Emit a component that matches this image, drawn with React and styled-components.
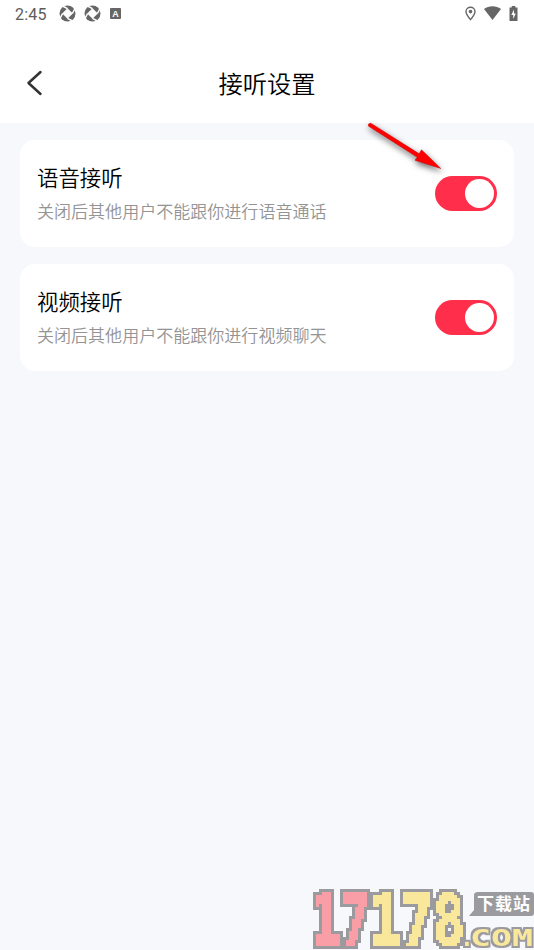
import React, { useState } from "react";
import styled, { createGlobalStyle } from "styled-components";

const GlobalStyle = createGlobalStyle`
  body {
    margin: 0;
    background: #f6f8fc;
    font-family: "Liberation Sans", "Noto Sans CJK SC", sans-serif;
  }
`;
const Page = styled.div`
  position: relative;
  width: 534px;
  height: 950px;
  overflow: hidden;
  background: #f6f8fc;
`;
const StatusBar = styled.div`
  display: flex;
  align-items: center;
  justify-content: space-between;
  height: 26px;
  padding: 0 16px 0 15px;
  background: #fff;
`;
const StatusGroup = styled.div`
  display: flex;
  align-items: center;
  gap: ${props => props.$gap}px;
`;
const Time = styled.span`
  width: 36px;
  margin-top: 3px;
  font-family: Roboto, sans-serif;
  font-size: 16px;
  font-weight: 400;
  line-height: 26px;
  letter-spacing: 0.2px;
  color: #5c5c5c;
`;
const StatusIcon = styled.svg`
  display: block;
  fill: #666;
`;
const NavBar = styled.div`
  display: grid;
  grid-template-columns: 60px 1fr 60px;
  align-items: center;
  height: 97px;
  background: #fff;
`;
const Back = styled.button`
  display: block;
  justify-self: start;
  padding: 0 0 0 26px;
  margin-top: 17px;
  border: 0;
  background: none;
  line-height: 0;
  cursor: pointer;
`;
const Title = styled.h1`
  margin: 20px 0 0;
  font-size: 24.3px;
  font-weight: 350;
  line-height: 36px;
  text-align: center;
  color: #000;
`;
const List = styled.div`
  display: flex;
  flex-direction: column;
  gap: 17px;
  padding: 17px 20px;
`;
const Card = styled.div`
  display: flex;
  align-items: center;
  justify-content: space-between;
  height: 107px;
  padding: 0 17px;
  box-sizing: border-box;
  border-radius: 15px;
  background: #fff;
`;
const Name = styled.div`
  margin-top: 1px;
  font-size: 21.4px;
  font-weight: 350;
  line-height: 32px;
  color: #000;
`;
const Desc = styled.div`
  margin-top: 5px;
  font-size: 17.05px;
  font-weight: 350;
  line-height: 26px;
  color: #949494;
`;
const Switch = styled.button`
  display: flex;
  align-items: center;
  justify-content: ${props => props.$on ? 'flex-end' : 'flex-start'};
  width: 62.5px;
  height: 34.6px;
  padding: 0 2.8px;
  border: 0;
  border-radius: 18px;
  background: ${props => props.$on ? '#ff2e4a' : '#ddd'};
  cursor: pointer;
`;
const Knob = styled.span`
  width: 28.8px;
  height: 28.8px;
  border-radius: 50%;
  background: #fff;
`;
const Arrow = styled.svg`
  position: absolute;
  left: 360px;
  top: 115px;
  overflow: visible;
  filter: drop-shadow(1px 3px 3px rgba(0, 0, 0, 0.6));
  pointer-events: none;
`;
const Watermark = styled.svg`
  position: absolute;
  right: 0;
  bottom: 0;
  overflow: visible;
`;
const Digits = styled.text`
  font-family: "DejaVu Sans Mono", monospace;
  font-weight: 700;
  font-size: 69px;
  fill: ${props => props.color};
  stroke: ${props => props.color};
  stroke-width: 2px;
`;
const Domain = styled.text`
  font-family: "DejaVu Sans Mono", monospace;
  font-weight: 700;
  font-size: 23px;
  fill: #f9e79b;
`;
const BadgeText = styled.text`
  font-family: "Noto Sans CJK SC", sans-serif;
  font-weight: 700;
  font-size: 17px;
  fill: #fff;
`;

const Aperture = () => (
  <StatusIcon width="17" height="17" viewBox="0 0 17 17">
    <circle cx="8.5" cy="8.5" r="8" />
    <path d="M8.5 3.2 13.800 8.500 8.500 13.800 3.200 8.500z" fill="#fff" />
    <path d="M8.500 3.600 3.500 1M13.400 8.500 16 3.500M8.500 13.400 13.500 16M3.600 8.500 1 13.500" stroke="#fff" strokeWidth="1.5" />
  </StatusIcon>
);

const rows = [
  { name: '语音接听', desc: '关闭后其他用户不能跟你进行语音通话' },
  { name: '视频接听', desc: '关闭后其他用户不能跟你进行视频聊天' }
];

const Row = ({ name, desc }) => {
  const [on, setOn] = useState(true);
  return (
    <Card>
      <div>
        <Name>{name}</Name>
        <Desc>{desc}</Desc>
      </div>
      <Switch $on={on} role="switch" aria-checked={on} aria-label={name} onClick={() => setOn(!on)}>
        <Knob />
      </Switch>
    </Card>
  );
};

// samples one point per cell, grows it back to a block, then adds a grey rim
const PixelFilter = ({ id, cell, rim }) => {
  const mid = (cell - 1) / 2;
  return (
    <filter id={id} filterUnits="userSpaceOnUse" x="0" y="0" width="231" height="72" colorInterpolationFilters="sRGB">
      <feComponentTransfer in="SourceGraphic" result="hard">
        <feFuncA type="discrete" tableValues="0 1" />
      </feComponentTransfer>
      <feFlood x="0" y="0" width={cell} height={cell} floodOpacity="0" result="empty" />
      <feFlood x={mid} y={mid} width="1" height="1" floodColor="#000" result="point" />
      <feMerge x="0" y="0" width={cell} height={cell} result="unit">
        <feMergeNode in="empty" />
        <feMergeNode in="point" />
      </feMerge>
      <feTile in="unit" result="grid" />
      <feComposite in="hard" in2="grid" operator="in" />
      <feMorphology operator="dilate" radius={mid} result="blocks" />
      <feMorphology in="blocks" operator="dilate" radius={rim} result="grown" />
      <feFlood floodColor="#9b9a9f" />
      <feComposite in2="grown" operator="in" result="edge" />
      <feMerge>
        <feMergeNode in="edge" />
        <feMergeNode in="blocks" />
      </feMerge>
    </filter>
  );
};

// same grey rim without the block sampling
const RimFilter = ({ id, rim }) => (
  <filter id={id} filterUnits="userSpaceOnUse" x="0" y="0" width="231" height="72" colorInterpolationFilters="sRGB">
    <feMorphology in="SourceAlpha" operator="dilate" radius={rim} result="grown" />
    <feFlood floodColor="#9b9a9f" />
    <feComposite in2="grown" operator="in" result="edge" />
    <feMerge>
      <feMergeNode in="edge" />
      <feMergeNode in="SourceGraphic" />
    </feMerge>
  </filter>
);

const App = () => (
  <Page>
    <GlobalStyle />
    <StatusBar>
      <StatusGroup $gap={8}>
        <Time>2:45</Time>
        <Aperture />
        <Aperture />
        <StatusIcon width="13" height="13" viewBox="0 0 13 13">
          <rect x="1" y="1" width="11" height="11" rx="1" />
          <text x="6.5" y="10" textAnchor="middle" fontSize="9" fontWeight="700" fill="#fff">A</text>
        </StatusIcon>
      </StatusGroup>
      <StatusGroup $gap={8}>
        <StatusIcon width="11" height="15" viewBox="0 0 11 15">
          <path d="M5.5 1.2C3 1.2 1 3 1 5.6c0 3.1 4.5 8 4.5 8S10 8.7 10 5.6C10 3 8 1.2 5.5 1.2z" fill="none" stroke="#666" strokeWidth="1.4" />
          <circle cx="5.5" cy="5.6" r="1.8" />
        </StatusIcon>
        <StatusIcon width="17" height="14" viewBox="0 0 17 14">
          <path d="M0 3C5-.7 12-.7 17 3L8.5 14z" />
        </StatusIcon>
        <StatusIcon width="9" height="15" viewBox="0 0 9 15">
          <path d="M.5 1.5h2.2V0h3.6v1.5h2.2V15H.5z" />
          <path d="M5 3.5 2.3 9h1.9v4l2.6-5.5H5z" fill="#fff" />
        </StatusIcon>
      </StatusGroup>
    </StatusBar>
    <NavBar>
      <Back aria-label="返回">
        <svg width="17" height="26" viewBox="0 0 17 26" fill="none" stroke="#333" strokeWidth="2.5" strokeLinecap="round" strokeLinejoin="round">
          <path d="M14.5 2 2.5 13l12 11" />
        </svg>
      </Back>
      <Title>接听设置</Title>
    </NavBar>
    <List>
      {rows.map(row => <Row key={row.name} {...row} />)}
    </List>
    <Arrow width="90" height="65" viewBox="0 0 90 65">
      <path d="M8.3 11Q8 8 10.8 8.2L59.2 38.8 61.5 34.8 80.8 53.5 55 45.2 57.3 42.3z" fill="#f00" stroke="#c00" strokeWidth="0.5" />
    </Arrow>
    <Watermark width="230" height="70" viewBox="0 0 230 70">
      <defs>
        <PixelFilter id="blocky" cell={3} rim={3} />
        <RimFilter id="outlined" rim={2} />
      </defs>
      <g filter="url(#blocky)">
        <Digits x="7" y="65" textLength="59" lengthAdjust="spacingAndGlyphs" color="#f99ea6">17</Digits>
        <Digits x="65" y="65" textLength="96" lengthAdjust="spacingAndGlyphs" color="#f9e79b">178</Digits>
      </g>
      <g filter="url(#outlined)">
        <Domain x="156" y="66">.</Domain>
        <Domain x="166" y="66" textLength="63" lengthAdjust="spacingAndGlyphs">COM</Domain>
      </g>
      <path d="M174 12h53q3 0 3 3v18q0 3-3 3h-62l5-6V15q0-3 4-3z" fill="#9b9a9f" />
      <BadgeText x="173" y="30" textLength="53">下载站</BadgeText>
    </Watermark>
  </Page>
);

export default App;
